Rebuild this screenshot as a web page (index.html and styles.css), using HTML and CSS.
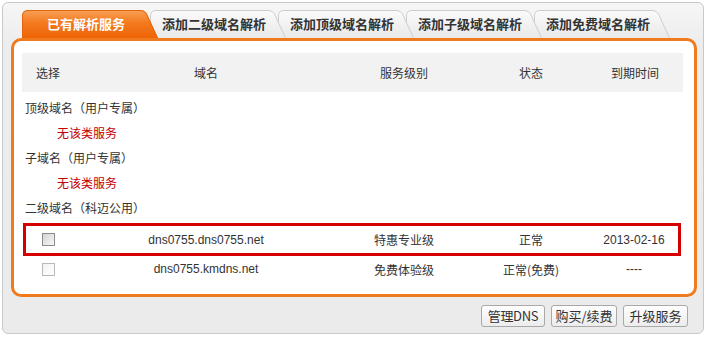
FILE: index.html
```html
<!DOCTYPE html>
<html lang="zh-CN">
<head>
<meta charset="utf-8">
<title>已有解析服务</title>
<link rel="stylesheet" href="styles.css">
</head>
<body>
<div class="box">
  <div class="tabs">
    <div class="tab active t1">
      <svg class="tab-bg" viewBox="0 0 136 28" preserveAspectRatio="none">
        <defs>
          <linearGradient id="ga" x1="0" y1="0" x2="0" y2="1">
            <stop offset="0" stop-color="#f9a259"/>
            <stop offset="0.45" stop-color="#f47a1f"/>
            <stop offset="1" stop-color="#ee6306"/>
          </linearGradient>
        </defs>
        <path d="M0 28 V6 Q0 0 6 0 H119 Q123 0 125 4 L136 28 Z" fill="url(#ga)"/>
        <path d="M0.5 28 V6 Q0.5 0.5 6 0.5 H119 Q122.5 0.5 124.5 4 L135.5 28" fill="none" stroke="#e4630d"/>
      </svg>
      <span class="tab-label">已有解析服务</span>
    </div>
    <div class="tab t2">
      <svg class="tab-bg" viewBox="0 0 136 28" preserveAspectRatio="none">
        <defs>
          <linearGradient id="gi" x1="0" y1="0" x2="0" y2="1">
            <stop offset="0" stop-color="#fbfbfb"/>
            <stop offset="1" stop-color="#e9e9e9"/>
          </linearGradient>
        </defs>
        <path d="M0 28 V6 Q0 0 6 0 H119 Q123 0 125 4 L136 28 Z" fill="url(#gi)"/>
        <path d="M0.5 28 V6 Q0.5 0.5 6 0.5 H119 Q122.5 0.5 124.5 4 L135.5 28" fill="none" stroke="#cdcdcd"/>
      </svg>
      <span class="tab-label">添加二级域名解析</span>
    </div>
    <div class="tab t3">
      <svg class="tab-bg" viewBox="0 0 136 28" preserveAspectRatio="none">
        <path d="M0 28 V6 Q0 0 6 0 H119 Q123 0 125 4 L136 28 Z" fill="url(#gi)"/>
        <path d="M0.5 28 V6 Q0.5 0.5 6 0.5 H119 Q122.5 0.5 124.5 4 L135.5 28" fill="none" stroke="#cdcdcd"/>
      </svg>
      <span class="tab-label">添加顶级域名解析</span>
    </div>
    <div class="tab t4">
      <svg class="tab-bg" viewBox="0 0 136 28" preserveAspectRatio="none">
        <path d="M0 28 V6 Q0 0 6 0 H119 Q123 0 125 4 L136 28 Z" fill="url(#gi)"/>
        <path d="M0.5 28 V6 Q0.5 0.5 6 0.5 H119 Q122.5 0.5 124.5 4 L135.5 28" fill="none" stroke="#cdcdcd"/>
      </svg>
      <span class="tab-label">添加子级域名解析</span>
    </div>
    <div class="tab t5">
      <svg class="tab-bg" viewBox="0 0 136 28" preserveAspectRatio="none">
        <path d="M0 28 V6 Q0 0 6 0 H119 Q123 0 125 4 L136 28 Z" fill="url(#gi)"/>
        <path d="M0.5 28 V6 Q0.5 0.5 6 0.5 H119 Q122.5 0.5 124.5 4 L135.5 28" fill="none" stroke="#cdcdcd"/>
      </svg>
      <span class="tab-label">添加免费域名解析</span>
    </div>
  </div>

  <div class="panel">
    <div class="grid head">
      <div class="c-sel">选择</div>
      <div class="c-mid">域名</div>
      <div class="c-mid">服务级别</div>
      <div class="c-mid">状态</div>
      <div class="c-mid">到期时间</div>
    </div>
    <div class="group first">顶级域名（用户专属）</div>
    <div class="none">无该类服务</div>
    <div class="group">子域名（用户专属）</div>
    <div class="none">无该类服务</div>
    <div class="group">二级域名（科迈公用）</div>
    <div class="grid row hl">
      <div class="c-sel"><input type="checkbox" class="chk dark"></div>
      <div class="c-mid latin">dns0755.dns0755.net</div>
      <div class="c-mid">特惠专业级</div>
      <div class="c-mid">正常</div>
      <div class="c-mid latin">2013-02-16</div>
    </div>
    <div class="grid row">
      <div class="c-sel"><input type="checkbox" class="chk"></div>
      <div class="c-mid latin">dns0755.kmdns.net</div>
      <div class="c-mid">免费体验级</div>
      <div class="c-mid">正常(免费)</div>
      <div class="c-mid latin">----</div>
    </div>
  </div>

  <div class="actions">
    <button class="btn b-dns">管理DNS</button>
    <button class="btn b-buy">购买/续费</button>
    <button class="btn b-up">升级服务</button>
  </div>
</div>
</body>
</html>
```

FILE: styles.css
```css
* { box-sizing: border-box; }

html, body {
  margin: 0;
  padding: 0;
  background: #ffffff;
}

body {
  font-family: "Noto Sans CJK SC", "Liberation Sans", sans-serif;
  font-size: 12px;
  color: #333333;
}

.box {
  margin: 2px 2px 0 2px;
  width: 702px;
  height: 332px;
  border: 1px solid #c9c9c9;
  border-radius: 6px;
  background: linear-gradient(#f6f6f6 0, #ededed 40px, #ebebeb 100%);
  padding: 7px 0 0 0;
  display: flex;
  flex-direction: column;
}

.tabs {
  display: flex;
  margin-left: 19px;
  height: 28px;
  position: relative;
  z-index: 2;
}

.tab {
  position: relative;
  width: 136px;
  height: 28px;
  margin-right: -8px;
  flex: none;
}

.t1 { z-index: 6; }
.t2 { z-index: 5; }
.t3 { z-index: 4; }
.t4 { z-index: 3; }
.t5 { z-index: 2; }

.tab-bg {
  position: absolute;
  left: 0;
  top: 0;
  width: 136px;
  height: 28px;
  display: block;
}

.tab-label {
  position: relative;
  display: block;
  width: 128px;
  text-align: center;
  line-height: 28px;
  font-size: 13px;
  font-weight: bold;
  color: #333333;
}

.tab.active .tab-label {
  color: #ffffff;
}

.panel {
  margin-left: 8px;
  width: 686px;
  border: 3px solid #f07a1e;
  border-radius: 10px;
  background: #ffffff;
  padding: 12px 11px 12px 8px;
  position: relative;
  z-index: 1;
}

.grid {
  display: grid;
  grid-template-columns: 57px 254px 142px 112px 1fr;
  align-items: center;
}

.head {
  height: 39px;
  background: #f2f2f2;
}

.c-sel {
  padding-left: 14px;
}

.c-mid {
  text-align: center;
}

.latin {
  font-family: "Liberation Sans", Arial, sans-serif;
}

.group {
  height: 25px;
  line-height: 25px;
  padding-left: 3px;
}

.group.first {
  margin-top: 3px;
}

.none {
  height: 25px;
  line-height: 25px;
  padding-left: 35px;
  color: #c40000;
}

.row {
  margin: 0 2px 0 1px;
  grid-template-columns: 56px 254px 142px 112px 1fr;
}

.row.hl {
  margin-top: 3px;
  height: 33px;
  outline: 3px solid #d60000;
  outline-offset: -3px;
}

.row:not(.hl) {
  height: 26px;
}

.row .c-sel {
  padding-left: 19px;
  display: flex;
  align-items: center;
}

.chk {
  -webkit-appearance: none;
  appearance: none;
  margin: 0;
  width: 13px;
  height: 13px;
  border: 1px solid #b8b8b8;
  border-radius: 0;
  background: linear-gradient(135deg, #f2f2f2, #ffffff);
}

.chk.dark {
  border-color: #8c8c8c;
  background: linear-gradient(135deg, #d4d4d4, #f7f7f7);
}

.actions {
  display: flex;
  justify-content: flex-end;
  gap: 6px;
  margin-top: 8px;
  padding-right: 15px;
}

.btn {
  height: 22px;
  padding: 0;
  margin: 0;
  border: 1px solid #a9a9a9;
  border-radius: 3px;
  background: linear-gradient(#ffffff, #ececec);
  font-family: "Noto Sans CJK SC", "Liberation Sans", sans-serif;
  font-size: 13px;
  color: #333333;
  line-height: 20px;
  text-align: center;
  white-space: nowrap;
}

.b-dns { width: 64px; letter-spacing: -0.3px; }
.b-buy { width: 66px; }
.b-up { width: 65px; }
```
